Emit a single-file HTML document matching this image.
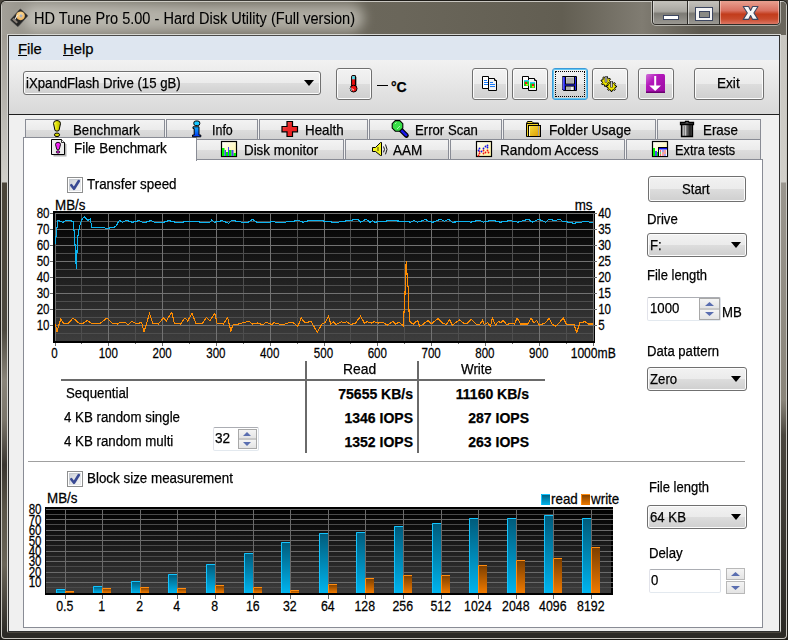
<!DOCTYPE html>
<html><head><meta charset="utf-8"><style>
*{margin:0;padding:0;box-sizing:border-box}
html,body{width:788px;height:640px;overflow:hidden;background:#4a463e}
body{position:relative;font-family:"Liberation Sans", sans-serif;color:#000}
.a{position:absolute}
.t{position:absolute;white-space:nowrap;line-height:1;-webkit-text-stroke:0.25px #000}
.btn{position:absolute;border:1px solid #707070;border-radius:3px;background:linear-gradient(#f2f2f2,#ebebeb 50%,#dddddd 50%,#cfcfcf);box-shadow:inset 0 0 0 1px #fcfcfc}
.tab{position:absolute;border:1px solid #898c95;border-bottom:none;background:linear-gradient(#f3f3f3,#ebebeb 50%,#dddddd 50%,#d2d2d2)}
.tb{position:absolute;background:#fff;border-radius:2px;border:1px solid #abadb3;border-color:#abadb3 #dbdfe6 #e3e9ef #e2e3ea}
.spin{position:absolute;border:1px solid #a0a0a0;background:#fff}
.sb{position:absolute;border:1px solid #b8b8b8;background:linear-gradient(#f4f4f4,#e4e4e4)}
svg{position:absolute;left:0;top:0}
</style></head><body>
<!-- frame -->
<div class="a" style="left:0;top:0;width:788px;height:640px;border-radius:6px 6px 0 0;background:#1e1c18"></div>
<div class="a" style="left:1px;top:1px;width:786px;height:638px;border-radius:5px 5px 4px 4px;background:#c8c6c0"></div>
<div class="a" style="left:2px;top:2px;width:784px;height:636px;border-radius:4px 4px 3px 3px;background:#4a463e"></div>
<div class="a" style="left:2px;top:2px;width:784px;height:33px;border-radius:4px 4px 0 0;background:linear-gradient(90deg,#a3a098 0,#8e8b82 40px,#6f6b60 200px,#6a665a 400px,#625e52 560px,#807c72 640px,#5c584e 700px,#6a665c 788px)"></div>
<div class="a" style="left:2px;top:35px;width:5px;height:598px;background:linear-gradient(#a09c94,#c0beb8 95px,#d2d0ca 147px,#4a4438 148px,#4c483e 295px,#8a857a 345px,#7a756a 385px,#3a3630 430px,#5a5548 475px,#6a6558 530px,#2c2a26 598px)"></div>
<div class="a" style="left:781px;top:35px;width:5px;height:598px;background:linear-gradient(#c8c6c0,#d2d0ca 147px,#9a968e 148px,#8a857a 365px,#4a463e 400px,#2c2a26 598px)"></div>
<div class="a" style="left:2px;top:633px;width:784px;height:5px;border-radius:0 0 4px 4px;background:#2c2a26"></div>
<!-- client border -->
<div class="a" style="left:7px;top:34px;width:774px;height:598px;border:1px solid #d6d6d2;border-bottom-color:#6a6862"></div>
<div class="a" style="left:8px;top:35px;width:772px;height:597px;border:1px solid #303030;background:#f0f0f0"></div>
<!-- title -->
<div class="a" style="left:24px;top:4px;width:340px;height:28px;border-radius:14px;background:rgba(230,228,220,.55);filter:blur(6px)"></div>
<svg width="40" height="36" style="left:0;top:0">
 <defs><radialGradient id="hd" cx=".4" cy=".4" r=".7"><stop offset="0" stop-color="#ffe0a0"/><stop offset="1" stop-color="#e8a850"/></radialGradient></defs>
 <g transform="translate(19.1,17.8) rotate(42)">
  <rect x="-5.2" y="-7.5" width="10.4" height="15" rx="1" fill="#262626"/>
  <rect x="-5.2" y="-7.5" width="10.4" height="15" rx="1" fill="none" stroke="#505050" stroke-width=".6"/>
  <circle cx="-0.3" cy="-2.4" r="4.4" fill="url(#hd)"/>
  <rect x="-1.2" y="-4" width="2.6" height="2.6" fill="#a8b0c0"/>
  <path d="M-3 -1L-2 5" stroke="#f0f0f0" stroke-width="1"/>
  <rect x="-4" y="4" width="6" height="2" fill="#8a8078"/>
 </g>
</svg>
<div class="t" style="left:34px;top:11.1px;font-size:15.6px;color:#000;-webkit-text-stroke:0.1px #000;transform:scaleX(.933);transform-origin:0 0">HD Tune Pro 5.00 - Hard Disk Utility (Full version)</div>
<!-- caption buttons -->
<div class="a" style="left:651px;top:1px;width:130px;height:25px;border-radius:0 0 5px 5px;background:rgba(235,235,230,.55)"></div>
<div class="a" style="left:652px;top:1px;width:128px;height:24px;border:1px solid #2e2c28;border-top:none;border-radius:0 0 4px 4px;overflow:hidden;background:linear-gradient(#c4c2bc,#a8a6a0 45%,#7c7a74 55%,#9a9892)">
  <div class="a" style="left:0;top:0;width:126px;height:24px;border:1px solid rgba(255,255,255,.45);border-top:none;border-radius:0 0 3px 3px"></div>
  <div class="a" style="left:34px;top:0;width:1px;height:24px;background:#2e2c28"></div>
  <div class="a" style="left:35px;top:0;width:1px;height:24px;background:rgba(255,255,255,.5)"></div>
  <div class="a" style="left:66px;top:0;width:1px;height:24px;background:#2e2c28"></div>
  <div class="a" style="left:67px;top:0;width:59px;height:24px;background:linear-gradient(#e8a090,#d87060 40%,#c23c1c 55%,#c84a2c 75%,#e08070)"></div>
  <div class="a" style="left:67px;top:0;width:59px;height:24px;border:1px solid rgba(255,220,210,.5);border-top:none"></div>
  <div class="a" style="left:10px;top:14px;width:16px;height:5px;background:#fff;border:1px solid #3c4660"></div>
  <div class="a" style="left:42px;top:6px;width:18px;height:14px;border:1px solid #3c4660;background:#f4f4f4"></div>
  <div class="a" style="left:45.5px;top:9.5px;width:11px;height:7px;border:1px solid #3c4660;background:#8a8a84"></div>
</div>
<svg width="788" height="40" style="left:0;top:0">
 <path d="M743.2 6.5H748.6L750.6 10.4L752.6 6.5H758L753.9 13L758 19.4H752.6L750.6 15.6L748.6 19.4H743.2L747.3 13Z" fill="#f6f6f6" stroke="#3c4660" stroke-width="1.1" stroke-linejoin="round"/>
</svg>
<!-- menu bar -->
<div class="a" style="left:9px;top:36px;width:770px;height:24px;background:#dee6f0"></div>
<div class="t" style="left:18px;top:42px;font-size:14.8px"><u>F</u>ile</div>
<div class="t" style="left:63px;top:42px;font-size:14.8px"><u>H</u>elp</div>
<!-- toolbar -->
<div class="a" style="left:9px;top:60px;width:770px;height:54px;background:linear-gradient(#f2f2f2,#e2e2e2 60%,#d8d8d8)"></div>
<div class="a" style="left:9px;top:114px;width:770px;height:1px;background:#1e1e1e"></div>
<div class="btn" style="left:23px;top:71px;width:298px;height:24px"></div>
<div class="t" style="left:26.2px;top:76.22px;font-size:14.12px;transform:scaleX(0.9346);transform-origin:0 0">iXpandFlash Drive (15 gB)</div>
<svg width="20" height="10" style="left:304px;top:80px"><path d="M0 0H10L5 6Z" fill="#000"/></svg>
<div class="btn " style="left:336px;top:68px;width:36px;height:32px"></div>
<svg width="20" height="24" style="left:344px;top:72px">
 <path d="M8.5 4.5Q8.5 3.5 9.5 3.5H10.5Q11.5 3.5 11.5 4.5V13" fill="none" stroke="#000" stroke-width="1.2"/>
 <rect x="7.6" y="3.6" width="3.8" height="12" rx="1" fill="#f01010" stroke="#000" stroke-width="1"/>
 <rect x="8.1" y="4.1" width="2.8" height="3.2" fill="#50e0f0"/>
 <path d="M11.6 5V15" stroke="#000" stroke-width="1.3"/>
 <circle cx="9.6" cy="16.6" r="3.4" fill="#f01010" stroke="#000" stroke-width="1"/>
 <path d="M6.6 15.5Q6.3 17.5 7.8 18.8" stroke="#70e8f0" stroke-width="1" fill="none"/>
 <path d="M8.2 16.5Q8.6 17.8 9.8 18" stroke="#fff" stroke-width="1" fill="none"/>
</svg>
<div class="a" style="left:377px;top:85px;width:11px;height:1px;background:#000"></div><div class="t" style="left:391px;top:79.5px;font-size:14px;font-weight:bold">&#176;C</div>
<div class="btn " style="left:472px;top:68px;width:36px;height:32px"></div>
<div class="btn " style="left:512px;top:68px;width:36px;height:32px"></div>
<div class="btn" style="left:552px;top:68px;width:36px;height:32px;border-color:#3c9ad8;box-shadow:inset 0 0 0 1px #64c8f4"></div>
<div class="a" style="left:555px;top:71px;width:30px;height:26px;border:1px dotted #000"></div>
<div class="btn " style="left:592px;top:68px;width:36px;height:32px"></div>
<div class="btn " style="left:638px;top:68px;width:36px;height:32px"></div>
<div class="btn " style="left:694px;top:68px;width:70px;height:32px"></div>
<div class="t" style="left:717.2px;top:76.19px;font-size:14.55px;transform:scaleX(0.9346);transform-origin:0 0">Exit</div>
<svg width="788" height="120" style="left:0;top:0">
 <!-- copy icon -->
 <g stroke="#000" stroke-width="1">
  <path d="M482.5 76.5H488.5V88.5H482.5Z" fill="#fff"/>
  <path d="M488.5 78.5H494.5L496.5 80.5V90.5H488.5Z" fill="#f2f2f2"/>
 </g>
 <path d="M494.5 78.5V80.5H496.5" stroke="#000" fill="#fff"/>
 <path d="M484 80.5H487M484 82.5H488M484 84.5H488M490 82.5H493M490 84.5H495M490 86.5H495" stroke="#1a7af8" stroke-width="1"/>
 <g stroke="#000" stroke-width="1">
  <path d="M522.5 76.5H528.5V88.5H522.5Z" fill="#fff"/>
  <path d="M528.5 78.5H534.5L536.5 80.5V90.5H528.5Z" fill="#f2f2f2"/>
 </g>
 <path d="M534.5 78.5V80.5H536.5" stroke="#000" fill="#fff"/>
 <rect x="524" y="80" width="5" height="6" fill="#10d020"/><rect x="524" y="80" width="5" height="1.5" fill="#30c8f8"/><rect x="525" y="82" width="2" height="2" fill="#f01010"/><rect x="526" y="84" width="2" height="1.5" fill="#f0e010"/>
 <rect x="530" y="82" width="5" height="6" fill="#10d020"/><rect x="530" y="82" width="5" height="1.5" fill="#30c8f8"/><rect x="532" y="84" width="2" height="2" fill="#f01010"/><rect x="532" y="86" width="2" height="1.5" fill="#f0e010"/>
 <!-- floppy -->
 <path d="M562.5 76.5H576.5V90.5H563.5L562.5 89.5Z" fill="#2424f0" stroke="#000"/>
 <path d="M563 77V89" stroke="#8888ff"/>
 <rect x="565.5" y="76.5" width="9" height="7.5" fill="#d0d0d0" stroke="#000" stroke-width="1"/>
 <path d="M566.5 79H573.5M566.5 81H573.5M566.5 83H573.5" stroke="#7a7a7a" stroke-width=".8"/>
 <rect x="565.5" y="86" width="9" height="4.5" fill="#b0b0b0" stroke="#000" stroke-width="1"/>
 <rect x="571" y="87" width="2" height="3" fill="#f0f0f0"/>
 <!-- gears -->
 <g fill="#f0e800" stroke="#000" stroke-width="1">
  <path d="M610.97 82.01L610.78 82.97L609.17 83.21L608.77 83.79L609.16 85.38L608.34 85.92L607.03 84.95L606.34 85.08L605.49 86.47L604.53 86.28L604.29 84.67L603.71 84.27L602.12 84.66L601.58 83.84L602.55 82.53L602.42 81.84L601.03 80.99L601.22 80.03L602.83 79.79L603.23 79.21L602.84 77.62L603.66 77.08L604.97 78.05L605.66 77.92L606.51 76.53L607.47 76.72L607.71 78.33L608.29 78.73L609.88 78.34L610.42 79.16L609.45 80.47L609.58 81.16Z"/><path d="M616.48 86.01L616.48 86.99L614.94 87.55L614.67 88.20L615.37 89.67L614.67 90.37L613.20 89.67L612.55 89.94L611.99 91.48L611.01 91.48L610.45 89.94L609.80 89.67L608.33 90.37L607.63 89.67L608.33 88.20L608.06 87.55L606.52 86.99L606.52 86.01L608.06 85.45L608.33 84.80L607.63 83.33L608.33 82.63L609.80 83.33L610.45 83.06L611.01 81.52L611.99 81.52L612.55 83.06L613.20 83.33L614.67 82.63L615.37 83.33L614.67 84.80L614.94 85.45Z"/>
 </g>
 <path d="M606 76V82.5M611.5 81V87.5" stroke="#303030" stroke-width="2.6"/>
 <path d="M606 76.5V82M611.5 81.5V87" stroke="#c8c8d0" stroke-width="1.2"/>
 <!-- purple -->
 <defs><linearGradient id="pg" x1="0" y1="0" x2="1" y2="1"><stop offset="0" stop-color="#d070d8"/><stop offset=".35" stop-color="#b418bc"/><stop offset="1" stop-color="#9a0aa0"/></linearGradient></defs>
 <rect x="646" y="74" width="19" height="19" rx="1.5" fill="url(#pg)"/>
 <rect x="646" y="91.5" width="19" height="1.5" fill="#6a0070"/>
 <path d="M654.2 76H656.2V85.5H661L655.2 91L649.2 85.5H654.2Z" fill="#fff"/>
</svg>
<!-- tabs -->
<div class="a" style="left:9px;top:115px;width:770px;height:516px;background:#f0f0f0"></div>
<div class="tab" style="left:25px;top:119px;width:140px;height:20px"></div><div class="tab" style="left:166px;top:119px;width:92px;height:20px"></div><div class="tab" style="left:259px;top:119px;width:109px;height:20px"></div><div class="tab" style="left:369px;top:119px;width:133px;height:20px"></div><div class="tab" style="left:503px;top:119px;width:153px;height:20px"></div><div class="tab" style="left:657px;top:119px;width:104px;height:20px"></div><div class="tab" style="left:196px;top:139px;width:148px;height:21px"></div><div class="tab" style="left:345px;top:139px;width:104px;height:21px"></div><div class="tab" style="left:450px;top:139px;width:175px;height:21px"></div><div class="tab" style="left:626px;top:139px;width:135px;height:21px"></div><div class="a" style="left:23px;top:159px;width:740px;height:469px;border:1px solid #898c95;background:#fff"></div><div class="a" style="left:23px;top:137px;width:174px;height:24px;border:1px solid #898c95;border-bottom:none;background:#fff"></div><div class="t" style="top:122.78px;left:72.90px;font-size:14.2px;transform:scaleX(0.9325);transform-origin:0 0">Benchmark</div><div class="t" style="top:122.78px;left:211.60px;font-size:14.2px;transform:scaleX(0.8782);transform-origin:0 0">Info</div><div class="t" style="top:122.78px;left:305.30px;font-size:14.2px;transform:scaleX(0.9403);transform-origin:0 0">Health</div><div class="t" style="top:122.78px;left:415.00px;font-size:14.2px;transform:scaleX(0.9269);transform-origin:0 0">Error Scan</div><div class="t" style="top:122.78px;left:549.00px;font-size:14.2px;transform:scaleX(0.9643);transform-origin:0 0">Folder Usage</div><div class="t" style="top:122.78px;left:703.10px;font-size:14.2px;transform:scaleX(0.9409);transform-origin:0 0">Erase</div><div class="t" style="top:140.58px;left:73.90px;font-size:14.2px;transform:scaleX(0.9415);transform-origin:0 0">File Benchmark</div><div class="t" style="top:142.68px;left:243.80px;font-size:14.2px;transform:scaleX(0.9403);transform-origin:0 0">Disk monitor</div><div class="t" style="top:142.68px;left:393.40px;font-size:14.2px;transform:scaleX(0.9522);transform-origin:0 0">AAM</div><div class="t" style="top:142.68px;left:499.50px;font-size:14.2px;transform:scaleX(0.9609);transform-origin:0 0">Random Access</div><div class="t" style="top:142.68px;left:675.20px;font-size:14.2px;transform:scaleX(0.8989);transform-origin:0 0">Extra tests</div><svg width="788" height="170" style="left:0;top:0">
 <defs>
  <linearGradient id="yel" x1="0" y1="0" x2="1" y2="0"><stop offset="0" stop-color="#f8f860"/><stop offset=".5" stop-color="#e0e000"/><stop offset="1" stop-color="#b0b000"/></linearGradient>
  <linearGradient id="red" x1="0" y1="0" x2="1" y2="1"><stop offset="0" stop-color="#f86060"/><stop offset=".4" stop-color="#e82828"/><stop offset="1" stop-color="#f01818"/></linearGradient>
  <linearGradient id="gold" x1="0" y1="0" x2="1" y2="1"><stop offset="0" stop-color="#f8e040"/><stop offset="1" stop-color="#d89800"/></linearGradient>
  <linearGradient id="can" x1="0" y1="0" x2="1" y2="0"><stop offset="0" stop-color="#606060"/><stop offset=".3" stop-color="#e8e8e8"/><stop offset=".5" stop-color="#808080"/><stop offset=".75" stop-color="#1a1a1a"/><stop offset="1" stop-color="#505050"/></linearGradient>
  <linearGradient id="ibl" x1="0" y1="0" x2="0" y2="1"><stop offset="0" stop-color="#10b0ff"/><stop offset="1" stop-color="#0030f0"/></linearGradient>
  <linearGradient id="pale" x1="0" y1="0" x2="1" y2="1"><stop offset="0" stop-color="#ffffff"/><stop offset="1" stop-color="#fff49a"/></linearGradient>
 </defs>
 <path d="M53.5 123.5Q53.5 120.5 57 120.5Q60.5 120.5 60.5 123.5L59 130.5Q57 131.8 55 130.5Z" fill="url(#yel)" stroke="#000"/>
 <ellipse cx="57" cy="134.8" rx="2.6" ry="1.8" fill="#d8d800" stroke="#000"/>
 <path d="M52.5 155.5H65.5V143.5L61.5 139.5H52.5Z" fill="#202020" transform="translate(1,1)" opacity=".35"/>
 <path d="M51.5 154.5H64.5V142.5L61.5 139.5H51.5Z" fill="#ececec" stroke="#000"/>
 <path d="M61.5 139.5V142.5H64.5" fill="#fff" stroke="#000" stroke-width=".8"/>
 <path d="M55.5 144.5Q55.5 142.3 58 142.3Q60.5 142.3 60.5 144.5L59.2 149.5Q58 150.3 56.8 149.5Z" fill="#f020f0" stroke="#000" stroke-width=".9"/>
 <ellipse cx="58" cy="152" rx="1.8" ry="1.2" fill="#e020e0" stroke="#000" stroke-width=".7"/>
 <rect x="193.8" y="121" width="6" height="4.6" rx="2" fill="#18c8ff" stroke="#000"/>
 <path d="M193 126.8H199V135H200.8V136.8H192.5V135H194.2V128.6H193Z" fill="url(#ibl)" stroke="#000"/>
 <rect x="221.5" y="141.5" width="15" height="15" fill="url(#pale)" stroke="#000" stroke-width="1.2"/>
 <path d="M222 148H224.5V156H222ZM226 152H228V156H226ZM229 150H231.5V156H229ZM233.5 153H236V156H233.5Z" fill="#00f000"/>
 <path d="M224.5 150H226V156H224.5ZM228 147H229V156H228ZM231.5 150H233.5V156H231.5Z" fill="#4848f0"/>
 <path d="M287 121.5H292.5V126.5H297.5V131.8H292.5V136.5H287V131.8H282V126.5H287Z" fill="url(#red)" stroke="#000" stroke-width="1.2"/>
 <path d="M400.5 129.5L406.5 135.5" stroke="#000" stroke-width="4.6" stroke-linecap="round"/>
 <path d="M400.8 129.8L406.2 135.2" stroke="#1818e8" stroke-width="2.6" stroke-linecap="round"/>
 <path d="M395.3 120.6H399.7L402.8 123.7V128.1L399.7 131.2H395.3L392.2 128.1V123.7Z" fill="#38e048" stroke="#000" stroke-width="1.1"/>
 <path d="M395 124L396.5 122.5M397 129L400 126" stroke="#d8ffd8" stroke-width=".7"/>
 <path d="M526.5 123.5L527.5 121.5H532L533.5 123H538.5V125.5H526.5Z" fill="#f0d830" stroke="#000"/>
 <path d="M526.5 123.5V136.5H528.5V125.5H538.5V123.5Z" fill="#f0d020" stroke="#000"/>
 <rect x="528.5" y="125.5" width="12" height="11" fill="url(#gold)" stroke="#000"/>
 <path d="M529.5 126.5V136" stroke="#fff8c0"/>
 <path d="M538.5 126V136" stroke="#a0a0a0"/>
 <path d="M680.5 122.5H685L685.5 121.5H688.5L689 122.5H693.5V124.5H680.5Z" fill="#707070" stroke="#000" stroke-width="1.3"/>
 <path d="M681.5 124.5H692.5V136.5H681.5Z" fill="url(#can)" stroke="#000" stroke-width="1.3"/><path d="M684.5 125.5V136M687 125.5V136M689.5 125.5V136" stroke="#303030" stroke-width=".5"/>
 <path d="M372.5 147.5H375.5L380.5 142.5H381.5V155.5H380.5L375.5 151.5H372.5Z" fill="#f4f420" stroke="#000"/>
 <path d="M378 147V151" stroke="#000" stroke-width=".7"/>
 <path d="M383.5 146.5Q385.5 149.3 383.5 152.3M385.5 144.5Q388.5 149.3 385.5 154.3" stroke="#000" fill="none" stroke-width=".9"/>
 <rect x="476.5" y="141.5" width="15" height="15" fill="url(#pale)" stroke="#000" stroke-width="1.2"/>
 <g fill="#f01010"><circle cx="478.5" cy="155.5" r=".9"/><circle cx="479.5" cy="153.5" r=".9"/><circle cx="479.5" cy="151.5" r=".9"/><circle cx="483.5" cy="153.5" r=".9"/><circle cx="483.5" cy="150.5" r=".9"/><circle cx="485.5" cy="152.5" r=".9"/><circle cx="487.5" cy="150.5" r=".9"/><circle cx="488.5" cy="152.5" r=".9"/></g>
 <g fill="#1010f0"><circle cx="478.5" cy="150.5" r=".9"/><circle cx="479.5" cy="148.5" r=".9"/><circle cx="481.5" cy="151.5" r=".9"/><circle cx="483.5" cy="148.5" r=".9"/><circle cx="485.5" cy="146.5" r=".9"/><circle cx="487.5" cy="145.5" r=".9"/><circle cx="487.5" cy="147.5" r=".9"/></g>
 <rect x="652.5" y="141.5" width="15" height="15" fill="url(#pale)" stroke="#000" stroke-width="1.2"/>
 <path d="M653 148H655V156H653ZM657 152H658V156H657Z" fill="#00f000"/><path d="M655 151H657V156H655Z" fill="#4848f0"/>
 <rect x="658.5" y="147.5" width="9" height="9" fill="#f8f8f8" stroke="#000"/>
 <rect x="659" y="148" width="8" height="1.5" fill="#1010f0"/>
 <g fill="#f01010"><circle cx="660.5" cy="151" r=".7"/><circle cx="665" cy="151" r=".7"/><circle cx="663" cy="153" r=".7"/><circle cx="665" cy="153" r=".7"/><circle cx="660.5" cy="155" r=".7"/><circle cx="663" cy="155" r=".7"/></g>
 <g fill="#1010f0"><circle cx="663" cy="151" r=".7"/><circle cx="665" cy="155" r=".7"/></g><circle cx="660.5" cy="153" r=".7" fill="#10c010"/>
</svg><div class="a" style="left:67px;top:177px;width:16px;height:16px;border:1px solid #8e8f8f;background:#fff"><div class="a" style="left:1px;top:1px;width:12px;height:12px;border:1px solid #c6cad0;border-right-color:#e6e8ea;border-bottom-color:#e6e8ea;background:linear-gradient(135deg,#cdd1d8,#e8e9eb 60%,#f6f6f6)"></div></div><svg width="16" height="16" style="left:67px;top:177px"><path d="M4.3 8.2L7 11.8L11.8 4" stroke="#3a4a94" stroke-width="2.6" fill="none" stroke-linecap="round" stroke-linejoin="round"/></svg><div class="t" style="left:86.7px;top:177.21px;font-size:14.34px;transform:scaleX(0.9346);transform-origin:0 0">Transfer speed</div><div class="a" style="left:67px;top:471px;width:16px;height:16px;border:1px solid #8e8f8f;background:#fff"><div class="a" style="left:1px;top:1px;width:12px;height:12px;border:1px solid #c6cad0;border-right-color:#e6e8ea;border-bottom-color:#e6e8ea;background:linear-gradient(135deg,#cdd1d8,#e8e9eb 60%,#f6f6f6)"></div></div><svg width="16" height="16" style="left:67px;top:471px"><path d="M4.3 8.2L7 11.8L11.8 4" stroke="#3a4a94" stroke-width="2.6" fill="none" stroke-linecap="round" stroke-linejoin="round"/></svg><div class="t" style="left:86.7px;top:471.21px;font-size:14.34px;transform:scaleX(0.9346);transform-origin:0 0">Block size measurement</div><div class="a" style="left:61px;top:379px;width:484px;height:2px;background:#6a6a6a"></div><div class="a" style="left:305px;top:361px;width:2px;height:92px;background:#6a6a6a"></div><div class="a" style="left:417px;top:361px;width:2px;height:92px;background:#6a6a6a"></div><div class="t" style="left:343.2px;top:362.18px;font-size:14.87px;transform:scaleX(0.9346);transform-origin:0 0">Read</div><div class="t" style="left:460.7px;top:362.21px;font-size:14.34px;transform:scaleX(0.9346);transform-origin:0 0">Write</div><div class="t" style="left:66.2px;top:386.21px;font-size:14.23px;transform:scaleX(0.9346);transform-origin:0 0">Sequential</div><div class="t" style="left:64.2px;top:410.21px;font-size:14.23px;transform:scaleX(0.9346);transform-origin:0 0">4 KB random single</div><div class="t" style="left:64.2px;top:434.21px;font-size:14.23px;transform:scaleX(0.9346);transform-origin:0 0">4 KB random multi</div><div class="t" style="right:375px;top:387px;font-size:14px;font-weight:bold">75655 KB/s</div><div class="t" style="right:375px;top:411px;font-size:14px;font-weight:bold">1346 IOPS</div><div class="t" style="right:375px;top:435px;font-size:14px;font-weight:bold">1352 IOPS</div><div class="t" style="right:259px;top:387px;font-size:14px;font-weight:bold">11160 KB/s</div><div class="t" style="right:259px;top:411px;font-size:14px;font-weight:bold">287 IOPS</div><div class="t" style="right:259px;top:435px;font-size:14px;font-weight:bold">263 IOPS</div><div class="tb" style="left:213px;top:427px;width:46px;height:24px"></div><div class="t" style="left:215.2px;top:431.19px;font-size:14.55px;transform:scaleX(0.9346);transform-origin:0 0">32</div><div class="a" style="left:238px;top:429px;width:19px;height:20px;border:1px solid #a8a8a8;background:#c8c8c8"></div><div class="sb" style="left:239px;top:430px;width:17px;height:8px;border:none"></div><div class="sb" style="left:239px;top:440px;width:17px;height:8px;border:none"></div><svg width="20" height="20" style="left:238px;top:429px"><path d="M5 7H13L9 3Z" fill="#5a6eb0"/><path d="M5 13H13L9 17Z" fill="#5a6eb0"/></svg><div class="a" style="left:28px;top:461px;width:717px;height:1px;background:#a0a0a0"></div><div class="btn " style="left:648px;top:176px;width:98px;height:26px"></div><div class="t" style="left:682.2px;top:182.22px;font-size:14.02px;transform:scaleX(0.9346);transform-origin:0 0">Start</div><div class="t" style="left:646.7px;top:212.22px;font-size:14.12px;transform:scaleX(0.9346);transform-origin:0 0">Drive</div><div class="btn " style="left:647px;top:233px;width:100px;height:24px"></div><div class="t" style="left:650.2px;top:238.22px;font-size:14.12px;transform:scaleX(0.9346);transform-origin:0 0">F:</div><svg width="12" height="8" style="left:731px;top:242px"><path d="M0 0H10L5 6Z" fill="#000"/></svg><div class="t" style="left:646.7px;top:269.43px;font-size:13.91px;transform:scaleX(0.9346);transform-origin:0 0">File length</div><div class="tb" style="left:647px;top:297px;width:74px;height:24px"></div><div class="t" style="left:649.7px;top:301.22px;font-size:14.12px;transform:scaleX(0.9346);transform-origin:0 0">1000</div><div class="a" style="left:699px;top:298px;width:21px;height:22px;border:1px solid #a8a8a8;background:#c8c8c8"></div><div class="sb" style="left:700px;top:299px;width:19px;height:9px;border:none"></div><div class="sb" style="left:700px;top:310px;width:19px;height:9px;border:none"></div><svg width="22" height="22" style="left:699px;top:298px"><path d="M6 8H15L10.5 4Z" fill="#5a6eb0"/><path d="M6 14H15L10.5 18Z" fill="#5a6eb0"/></svg><div class="t" style="left:722.2px;top:305.22px;font-size:14.12px;transform:scaleX(0.9346);transform-origin:0 0">MB</div><div class="t" style="left:646.7px;top:344.22px;font-size:14.02px;transform:scaleX(0.9346);transform-origin:0 0">Data pattern</div><div class="btn " style="left:647px;top:367px;width:100px;height:24px"></div><div class="t" style="left:650.2px;top:372.22px;font-size:14.12px;transform:scaleX(0.9346);transform-origin:0 0">Zero</div><svg width="12" height="8" style="left:731px;top:376px"><path d="M0 0H10L5 6Z" fill="#000"/></svg><div class="t" style="left:648.7px;top:481.23px;font-size:13.91px;transform:scaleX(0.9346);transform-origin:0 0">File length</div><div class="btn " style="left:647px;top:505px;width:100px;height:24px"></div><div class="t" style="left:650.2px;top:510.22px;font-size:14.12px;transform:scaleX(0.9346);transform-origin:0 0">64 KB</div><svg width="12" height="8" style="left:731px;top:514px"><path d="M0 0H10L5 6Z" fill="#000"/></svg><div class="t" style="left:648.7px;top:546.22px;font-size:14.12px;transform:scaleX(0.9346);transform-origin:0 0">Delay</div><div class="tb" style="left:649px;top:569px;width:72px;height:24px"></div><div class="t" style="left:651.2px;top:573.22px;font-size:14.12px;transform:scaleX(0.9346);transform-origin:0 0">0</div><div class="sb" style="left:726px;top:568px;width:19px;height:12px"></div><div class="sb" style="left:726px;top:581px;width:19px;height:13px"></div><svg width="22" height="28" style="left:726px;top:568px"><path d="M5 8H14L9.5 4Z" fill="#5a6eb0"/><path d="M5 18H14L9.5 22Z" fill="#5a6eb0"/></svg><svg width="788" height="640" style="left:0;top:0;font-family:'Liberation Sans',sans-serif"><defs><linearGradient id="c1bg" x1="0" y1="0" x2="0" y2="1"><stop offset="0" stop-color="#000"/><stop offset="1" stop-color="#3d3d3d"/></linearGradient><linearGradient id="c2bg" x1="0" y1="0" x2="0" y2="1"><stop offset="0" stop-color="#000"/><stop offset="1" stop-color="#3d3d3d"/></linearGradient><linearGradient id="bb" x1="0" y1="0" x2="0" y2="1"><stop offset="0" stop-color="#005a7a"/><stop offset="1" stop-color="#00b4ee"/></linearGradient><linearGradient id="ob" x1="0" y1="0" x2="0" y2="1"><stop offset="0" stop-color="#7a3e00"/><stop offset="1" stop-color="#f07a00"/></linearGradient></defs><rect x="53" y="211" width="542" height="132" fill="#000"/><rect x="55" y="213" width="539" height="128" fill="url(#c1bg)"/><path d="M55 221.5H594M55 237.5H594M55 253.5H594M55 269.5H594M55 285.5H594M55 301.5H594M55 317.5H594M55 333.5H594M81.5 213V341M135.5 213V341M189.5 213V341M243.5 213V341M297.5 213V341M350.5 213V341M404.5 213V341M458.5 213V341M512.5 213V341M566.5 213V341" stroke="#4e4e4e" stroke-width="1" fill="none"/><path d="M55 213.5H594M55 229.5H594M55 245.5H594M55 261.5H594M55 277.5H594M55 293.5H594M55 309.5H594M55 325.5H594M55.5 213V341M108.5 213V341M162.5 213V341M216.5 213V341M270.5 213V341M324.5 213V341M377.5 213V341M431.5 213V341M485.5 213V341M539.5 213V341M593.5 213V341" stroke="#727272" stroke-width="1" fill="none"/><path d="M55.5 343V346M81.5 343V344M108.5 343V346M135.5 343V344M162.5 343V346M189.5 343V344M216.5 343V346M243.5 343V344M270.5 343V346M297.5 343V344M324.5 343V346M350.5 343V344M377.5 343V346M404.5 343V344M431.5 343V346M458.5 343V344M485.5 343V346M512.5 343V344M539.5 343V346M566.5 343V344M593.5 343V346M50 213.5H53M594 213.5H597M50 229.5H53M594 229.5H597M50 245.5H53M594 245.5H597M50 261.5H53M594 261.5H597M50 277.5H53M594 277.5H597M50 293.5H53M594 293.5H597M50 309.5H53M594 309.5H597M50 325.5H53M594 325.5H597" stroke="#6b6b6b" stroke-width="1" fill="none"/><polyline points="55.2,243.9 57.8,220.4 62.8,222.3 66.0,220.4 69.8,220.4 73.2,221.6 74.5,235.0 76.3,268.6 77.2,247.0 78.2,233.0 80.0,224.8 82.5,218.5 84.2,216.6 87.6,220.4 90.1,219.1 92.0,227.4 103.5,227.4 106.0,228.6 113.6,227.4 116.1,226.1 119.3,220.4 122.5,222.3 126.3,220.4 132.6,222.3 138.8,220.6 144.0,222.8 151.0,220.6 155.7,222.8 163.0,222.4 169.0,220.6 174.0,221.9 178.0,222.4 185.0,221.9 194.8,221.3 201.0,222.2 209.9,222.2 211.6,220.1 214.3,222.2 222.3,220.6 228.5,223.3 231.2,220.6 238.3,221.3 241.8,222.2 248.0,222.2 252.5,219.2 256.9,222.2 270.3,222.2 272.0,221.3 275.6,222.2 284.5,222.2 291.6,221.3 298.7,220.6 303.1,222.2 309.3,220.6 320.0,220.6 333.3,222.2 337.8,222.2 348.4,220.6 357.3,219.2 360.9,222.2 365.8,219.2 370.0,222.2 372.4,220.6 375.0,222.2 383.0,221.3 391.0,220.6 403.5,221.3 410.6,222.2 414.1,220.6 417.3,222.2 423.0,220.6 425.7,219.2 428.3,221.3 432.8,222.2 437.2,220.6 440.8,219.2 444.3,221.3 448.8,219.2 452.3,222.2 466.5,221.3 471.0,222.2 479.0,220.1 483.4,222.2 492.3,220.1 500.3,222.2 510.0,220.6 518.0,222.2 528.2,219.2 532.3,222.2 538.5,219.2 545.6,222.2 549.1,219.2 555.4,220.6 559.8,219.2 562.5,221.3 568.7,222.2 574.0,223.3 586.4,221.3 590.0,222.2 593.0,222.2" fill="none" stroke="#0cb4f0" stroke-width="1.1" shape-rendering="crispEdges"/><polyline points="55.3,324.0 57.1,332.0 58.5,326.0 60.7,319.2 63.3,323.0 67.8,324.0 73.0,318.0 78.4,322.7 82.0,324.0 87.3,320.4 90.9,323.0 96.2,324.0 100.6,323.0 106.8,318.0 112.0,323.0 117.5,324.0 120.0,322.2 126.0,323.0 128.0,325.2 131.7,321.3 137.0,324.0 141.5,322.2 144.0,331.6 146.8,323.0 149.5,313.3 152.7,323.0 158.3,324.0 163.7,317.8 166.3,321.0 171.7,312.4 174.3,323.0 180.5,324.0 185.0,317.8 187.7,321.0 192.1,313.3 195.7,323.0 201.9,324.0 206.3,317.4 209.9,321.0 214.8,313.3 217.0,323.0 223.2,324.0 227.6,317.4 230.8,331.0 233.0,325.0 238.3,324.0 245.4,322.2 249.0,321.3 252.5,324.0 257.8,323.0 263.2,324.9 265.8,322.2 272.0,324.5 273.8,322.7 282.7,324.9 288.0,323.0 292.5,322.2 297.8,326.3 301.3,317.8 304.9,323.0 311.0,321.3 317.3,332.3 321.8,324.0 325.0,322.7 328.5,316.3 330.7,324.0 333.3,321.7 336.3,324.5 341.3,321.7 343.9,323.0 346.6,321.7 351.0,324.5 355.5,323.0 360.5,316.3 364.4,323.0 367.0,321.7 371.5,323.0 374.0,321.7 378.6,323.0 383.0,322.2 387.5,325.2 392.8,321.3 395.5,324.0 399.0,322.2 403.5,326.0 403.8,316.0 405.0,293.8 405.6,272.5 406.2,261.5 406.9,272.5 408.5,292.5 409.0,311.0 410.0,321.9 413.3,324.0 417.7,320.4 419.5,326.3 422.0,325.0 428.3,320.4 431.0,324.0 438.1,318.6 442.6,323.0 446.1,324.5 449.7,319.9 452.3,325.2 459.4,319.9 463.9,323.4 467.4,323.0 471.3,319.2 476.3,324.5 480.0,324.0 482.5,320.4 484.3,324.5 487.8,322.7 490.5,326.3 492.3,318.1 495.5,325.2 498.5,321.3 500.8,323.0 503.3,320.4 506.5,324.5 511.8,323.0 514.5,324.0 517.2,318.1 520.7,324.0 527.8,324.0 531.0,318.1 534.0,323.0 536.7,320.4 539.4,325.2 545.6,322.7 549.1,318.1 551.8,324.0 555.4,326.3 559.8,322.2 563.3,317.8 566.0,324.0 574.0,324.5 576.7,332.3 580.2,322.2 582.0,323.0 584.7,321.3 588.2,324.0 592.6,324.0" fill="none" stroke="#ff8c00" stroke-width="1.1" shape-rendering="crispEdges"/><text transform="translate(49.5,218) scale(0.82,1)" font-size="14.1" fill="#000" stroke="#000" stroke-width="0.25" font-weight="normal" text-anchor="end" >80</text><text transform="translate(49.5,234) scale(0.82,1)" font-size="14.1" fill="#000" stroke="#000" stroke-width="0.25" font-weight="normal" text-anchor="end" >70</text><text transform="translate(49.5,250) scale(0.82,1)" font-size="14.1" fill="#000" stroke="#000" stroke-width="0.25" font-weight="normal" text-anchor="end" >60</text><text transform="translate(49.5,266) scale(0.82,1)" font-size="14.1" fill="#000" stroke="#000" stroke-width="0.25" font-weight="normal" text-anchor="end" >50</text><text transform="translate(49.5,282) scale(0.82,1)" font-size="14.1" fill="#000" stroke="#000" stroke-width="0.25" font-weight="normal" text-anchor="end" >40</text><text transform="translate(49.5,298) scale(0.82,1)" font-size="14.1" fill="#000" stroke="#000" stroke-width="0.25" font-weight="normal" text-anchor="end" >30</text><text transform="translate(49.5,314) scale(0.82,1)" font-size="14.1" fill="#000" stroke="#000" stroke-width="0.25" font-weight="normal" text-anchor="end" >20</text><text transform="translate(49.5,330) scale(0.82,1)" font-size="14.1" fill="#000" stroke="#000" stroke-width="0.25" font-weight="normal" text-anchor="end" >10</text><text transform="translate(598.2,218) scale(0.82,1)" font-size="14.1" fill="#000" stroke="#000" stroke-width="0.25" font-weight="normal" text-anchor="start" >40</text><text transform="translate(598.2,234) scale(0.82,1)" font-size="14.1" fill="#000" stroke="#000" stroke-width="0.25" font-weight="normal" text-anchor="start" >35</text><text transform="translate(598.2,250) scale(0.82,1)" font-size="14.1" fill="#000" stroke="#000" stroke-width="0.25" font-weight="normal" text-anchor="start" >30</text><text transform="translate(598.2,266) scale(0.82,1)" font-size="14.1" fill="#000" stroke="#000" stroke-width="0.25" font-weight="normal" text-anchor="start" >25</text><text transform="translate(598.2,282) scale(0.82,1)" font-size="14.1" fill="#000" stroke="#000" stroke-width="0.25" font-weight="normal" text-anchor="start" >20</text><text transform="translate(598.2,298) scale(0.82,1)" font-size="14.1" fill="#000" stroke="#000" stroke-width="0.25" font-weight="normal" text-anchor="start" >15</text><text transform="translate(598.2,314) scale(0.82,1)" font-size="14.1" fill="#000" stroke="#000" stroke-width="0.25" font-weight="normal" text-anchor="start" >10</text><text transform="translate(598.2,330) scale(0.82,1)" font-size="14.1" fill="#000" stroke="#000" stroke-width="0.25" font-weight="normal" text-anchor="start" >5</text><text transform="translate(54.5,357.7) scale(0.82,1)" font-size="14.1" fill="#000" stroke="#000" stroke-width="0.25" font-weight="normal" text-anchor="middle" >0</text><text transform="translate(108.3,357.7) scale(0.82,1)" font-size="14.1" fill="#000" stroke="#000" stroke-width="0.25" font-weight="normal" text-anchor="middle" >100</text><text transform="translate(162.1,357.7) scale(0.82,1)" font-size="14.1" fill="#000" stroke="#000" stroke-width="0.25" font-weight="normal" text-anchor="middle" >200</text><text transform="translate(215.9,357.7) scale(0.82,1)" font-size="14.1" fill="#000" stroke="#000" stroke-width="0.25" font-weight="normal" text-anchor="middle" >300</text><text transform="translate(269.7,357.7) scale(0.82,1)" font-size="14.1" fill="#000" stroke="#000" stroke-width="0.25" font-weight="normal" text-anchor="middle" >400</text><text transform="translate(323.5,357.7) scale(0.82,1)" font-size="14.1" fill="#000" stroke="#000" stroke-width="0.25" font-weight="normal" text-anchor="middle" >500</text><text transform="translate(377.3,357.7) scale(0.82,1)" font-size="14.1" fill="#000" stroke="#000" stroke-width="0.25" font-weight="normal" text-anchor="middle" >600</text><text transform="translate(431.1,357.7) scale(0.82,1)" font-size="14.1" fill="#000" stroke="#000" stroke-width="0.25" font-weight="normal" text-anchor="middle" >700</text><text transform="translate(484.9,357.7) scale(0.82,1)" font-size="14.1" fill="#000" stroke="#000" stroke-width="0.25" font-weight="normal" text-anchor="middle" >800</text><text transform="translate(538.7,357.7) scale(0.82,1)" font-size="14.1" fill="#000" stroke="#000" stroke-width="0.25" font-weight="normal" text-anchor="middle" >900</text><text transform="translate(593.2,357.7) scale(0.86,1)" font-size="14.1" fill="#000" stroke="#000" stroke-width="0.25" font-weight="normal" text-anchor="middle" >1000mB</text><text transform="translate(55,209.5) scale(0.95,1)" font-size="14.1" fill="#000" stroke="#000" stroke-width="0.25" font-weight="normal" text-anchor="start" >MB/s</text><text transform="translate(592.5,209.5) scale(0.95,1)" font-size="14.1" fill="#000" stroke="#000" stroke-width="0.25" font-weight="normal" text-anchor="end" >ms</text><rect x="45" y="507" width="568" height="88" fill="#000"/><rect x="46" y="509" width="565" height="84" fill="url(#c2bg)"/><path d="M46 509.5H613M46 519.5H613M46 530.5H613M46 540.5H613M46 551.5H613M46 561.5H613M46 572.5H613M46 582.5H613" stroke="#6b6b6b" fill="none"/><path d="M46 514.5H613M46 524.5H613M46 535.5H613M46 545.5H613M46 556.5H613M46 566.5H613M46 577.5H613M46 587.5H613" stroke="#4a4a4a" fill="none"/><path d="M65.5 509V593M65.5 595V599M102.5 509V593M102.5 595V599M140.5 509V593M140.5 595V599M177.5 509V593M177.5 595V599M215.5 509V593M215.5 595V599M253.5 509V593M253.5 595V599M290.5 509V593M290.5 595V599M328.5 509V593M328.5 595V599M365.5 509V593M365.5 595V599M403.5 509V593M403.5 595V599M441.5 509V593M441.5 595V599M478.5 509V593M478.5 595V599M516.5 509V593M516.5 595V599M553.5 509V593M553.5 595V599M591.5 509V593M591.5 595V599" stroke="#6b6b6b" fill="none"/><rect x="56" y="589" width="9" height="4" fill="url(#bb)"/><path d="M56.5 593V589.5H65" stroke="#12c4ff" fill="none"/><rect x="65" y="591" width="9" height="2" fill="url(#ob)"/><path d="M65.5 593V591.5H74" stroke="#ff8c10" fill="none"/><rect x="93" y="586" width="9" height="7" fill="url(#bb)"/><path d="M93.5 593V586.5H102" stroke="#12c4ff" fill="none"/><rect x="102" y="588" width="9" height="5" fill="url(#ob)"/><path d="M102.5 593V588.5H111" stroke="#ff8c10" fill="none"/><rect x="131" y="581" width="9" height="12" fill="url(#bb)"/><path d="M131.5 593V581.5H140" stroke="#12c4ff" fill="none"/><rect x="140" y="587" width="9" height="6" fill="url(#ob)"/><path d="M140.5 593V587.5H149" stroke="#ff8c10" fill="none"/><rect x="168" y="574" width="9" height="19" fill="url(#bb)"/><path d="M168.5 593V574.5H177" stroke="#12c4ff" fill="none"/><rect x="177" y="588" width="9" height="5" fill="url(#ob)"/><path d="M177.5 593V588.5H186" stroke="#ff8c10" fill="none"/><rect x="206" y="564" width="9" height="29" fill="url(#bb)"/><path d="M206.5 593V564.5H215" stroke="#12c4ff" fill="none"/><rect x="215" y="585" width="9" height="8" fill="url(#ob)"/><path d="M215.5 593V585.5H224" stroke="#ff8c10" fill="none"/><rect x="244" y="553" width="9" height="40" fill="url(#bb)"/><path d="M244.5 593V553.5H253" stroke="#12c4ff" fill="none"/><rect x="253" y="587" width="9" height="6" fill="url(#ob)"/><path d="M253.5 593V587.5H262" stroke="#ff8c10" fill="none"/><rect x="281" y="542" width="9" height="51" fill="url(#bb)"/><path d="M281.5 593V542.5H290" stroke="#12c4ff" fill="none"/><rect x="290" y="590" width="9" height="3" fill="url(#ob)"/><path d="M290.5 593V590.5H299" stroke="#ff8c10" fill="none"/><rect x="319" y="533" width="9" height="60" fill="url(#bb)"/><path d="M319.5 593V533.5H328" stroke="#12c4ff" fill="none"/><rect x="328" y="584" width="9" height="9" fill="url(#ob)"/><path d="M328.5 593V584.5H337" stroke="#ff8c10" fill="none"/><rect x="356" y="532" width="9" height="61" fill="url(#bb)"/><path d="M356.5 593V532.5H365" stroke="#12c4ff" fill="none"/><rect x="365" y="578" width="9" height="15" fill="url(#ob)"/><path d="M365.5 593V578.5H374" stroke="#ff8c10" fill="none"/><rect x="394" y="526" width="9" height="67" fill="url(#bb)"/><path d="M394.5 593V526.5H403" stroke="#12c4ff" fill="none"/><rect x="403" y="575" width="9" height="18" fill="url(#ob)"/><path d="M403.5 593V575.5H412" stroke="#ff8c10" fill="none"/><rect x="432" y="523" width="9" height="70" fill="url(#bb)"/><path d="M432.5 593V523.5H441" stroke="#12c4ff" fill="none"/><rect x="441" y="575" width="9" height="18" fill="url(#ob)"/><path d="M441.5 593V575.5H450" stroke="#ff8c10" fill="none"/><rect x="469" y="518" width="9" height="75" fill="url(#bb)"/><path d="M469.5 593V518.5H478" stroke="#12c4ff" fill="none"/><rect x="478" y="565" width="9" height="28" fill="url(#ob)"/><path d="M478.5 593V565.5H487" stroke="#ff8c10" fill="none"/><rect x="507" y="518" width="9" height="75" fill="url(#bb)"/><path d="M507.5 593V518.5H516" stroke="#12c4ff" fill="none"/><rect x="516" y="560" width="9" height="33" fill="url(#ob)"/><path d="M516.5 593V560.5H525" stroke="#ff8c10" fill="none"/><rect x="544" y="515" width="9" height="78" fill="url(#bb)"/><path d="M544.5 593V515.5H553" stroke="#12c4ff" fill="none"/><rect x="553" y="558" width="9" height="35" fill="url(#ob)"/><path d="M553.5 593V558.5H562" stroke="#ff8c10" fill="none"/><rect x="582" y="518" width="9" height="75" fill="url(#bb)"/><path d="M582.5 593V518.5H591" stroke="#12c4ff" fill="none"/><rect x="591" y="547" width="9" height="46" fill="url(#ob)"/><path d="M591.5 593V547.5H600" stroke="#ff8c10" fill="none"/><text transform="translate(41.5,514.2) scale(0.82,1)" font-size="14.1" fill="#000" stroke="#000" stroke-width="0.25" font-weight="normal" text-anchor="end" >80</text><text transform="translate(41.5,524.6) scale(0.82,1)" font-size="14.1" fill="#000" stroke="#000" stroke-width="0.25" font-weight="normal" text-anchor="end" >70</text><text transform="translate(41.5,535.0) scale(0.82,1)" font-size="14.1" fill="#000" stroke="#000" stroke-width="0.25" font-weight="normal" text-anchor="end" >60</text><text transform="translate(41.5,545.5) scale(0.82,1)" font-size="14.1" fill="#000" stroke="#000" stroke-width="0.25" font-weight="normal" text-anchor="end" >50</text><text transform="translate(41.5,555.9) scale(0.82,1)" font-size="14.1" fill="#000" stroke="#000" stroke-width="0.25" font-weight="normal" text-anchor="end" >40</text><text transform="translate(41.5,566.3) scale(0.82,1)" font-size="14.1" fill="#000" stroke="#000" stroke-width="0.25" font-weight="normal" text-anchor="end" >30</text><text transform="translate(41.5,576.7) scale(0.82,1)" font-size="14.1" fill="#000" stroke="#000" stroke-width="0.25" font-weight="normal" text-anchor="end" >20</text><text transform="translate(41.5,587.2) scale(0.82,1)" font-size="14.1" fill="#000" stroke="#000" stroke-width="0.25" font-weight="normal" text-anchor="end" >10</text><text transform="translate(64.8,610.5) scale(0.875,1)" font-size="14.1" fill="#000" stroke="#000" stroke-width="0.25" font-weight="normal" text-anchor="middle" >0.5</text><text transform="translate(101.8,610.5) scale(0.875,1)" font-size="14.1" fill="#000" stroke="#000" stroke-width="0.25" font-weight="normal" text-anchor="middle" >1</text><text transform="translate(139.8,610.5) scale(0.875,1)" font-size="14.1" fill="#000" stroke="#000" stroke-width="0.25" font-weight="normal" text-anchor="middle" >2</text><text transform="translate(176.8,610.5) scale(0.875,1)" font-size="14.1" fill="#000" stroke="#000" stroke-width="0.25" font-weight="normal" text-anchor="middle" >4</text><text transform="translate(214.8,610.5) scale(0.875,1)" font-size="14.1" fill="#000" stroke="#000" stroke-width="0.25" font-weight="normal" text-anchor="middle" >8</text><text transform="translate(252.8,610.5) scale(0.875,1)" font-size="14.1" fill="#000" stroke="#000" stroke-width="0.25" font-weight="normal" text-anchor="middle" >16</text><text transform="translate(289.8,610.5) scale(0.875,1)" font-size="14.1" fill="#000" stroke="#000" stroke-width="0.25" font-weight="normal" text-anchor="middle" >32</text><text transform="translate(327.8,610.5) scale(0.875,1)" font-size="14.1" fill="#000" stroke="#000" stroke-width="0.25" font-weight="normal" text-anchor="middle" >64</text><text transform="translate(364.8,610.5) scale(0.875,1)" font-size="14.1" fill="#000" stroke="#000" stroke-width="0.25" font-weight="normal" text-anchor="middle" >128</text><text transform="translate(402.8,610.5) scale(0.875,1)" font-size="14.1" fill="#000" stroke="#000" stroke-width="0.25" font-weight="normal" text-anchor="middle" >256</text><text transform="translate(440.8,610.5) scale(0.875,1)" font-size="14.1" fill="#000" stroke="#000" stroke-width="0.25" font-weight="normal" text-anchor="middle" >512</text><text transform="translate(477.8,610.5) scale(0.875,1)" font-size="14.1" fill="#000" stroke="#000" stroke-width="0.25" font-weight="normal" text-anchor="middle" >1024</text><text transform="translate(515.8,610.5) scale(0.875,1)" font-size="14.1" fill="#000" stroke="#000" stroke-width="0.25" font-weight="normal" text-anchor="middle" >2048</text><text transform="translate(552.8,610.5) scale(0.875,1)" font-size="14.1" fill="#000" stroke="#000" stroke-width="0.25" font-weight="normal" text-anchor="middle" >4096</text><text transform="translate(590.8,610.5) scale(0.875,1)" font-size="14.1" fill="#000" stroke="#000" stroke-width="0.25" font-weight="normal" text-anchor="middle" >8192</text><text transform="translate(47,503.2) scale(0.95,1)" font-size="14.1" fill="#000" stroke="#000" stroke-width="0.25" font-weight="normal" text-anchor="start" >MB/s</text><rect x="541" y="494" width="9" height="11" fill="url(#bb)"/><path d="M541.5 505V494.5H550" stroke="#12c4ff" fill="none"/><text transform="translate(551,503.7) scale(0.95,1)" font-size="14.1" fill="#000" stroke="#000" stroke-width="0.25" font-weight="normal" text-anchor="start" >read</text><rect x="581" y="494" width="9" height="11" fill="url(#ob)"/><path d="M581.5 505V494.5H590" stroke="#ff8c10" fill="none"/><text transform="translate(591,503.7) scale(0.95,1)" font-size="14.1" fill="#000" stroke="#000" stroke-width="0.25" font-weight="normal" text-anchor="start" >write</text></svg></body></html>
